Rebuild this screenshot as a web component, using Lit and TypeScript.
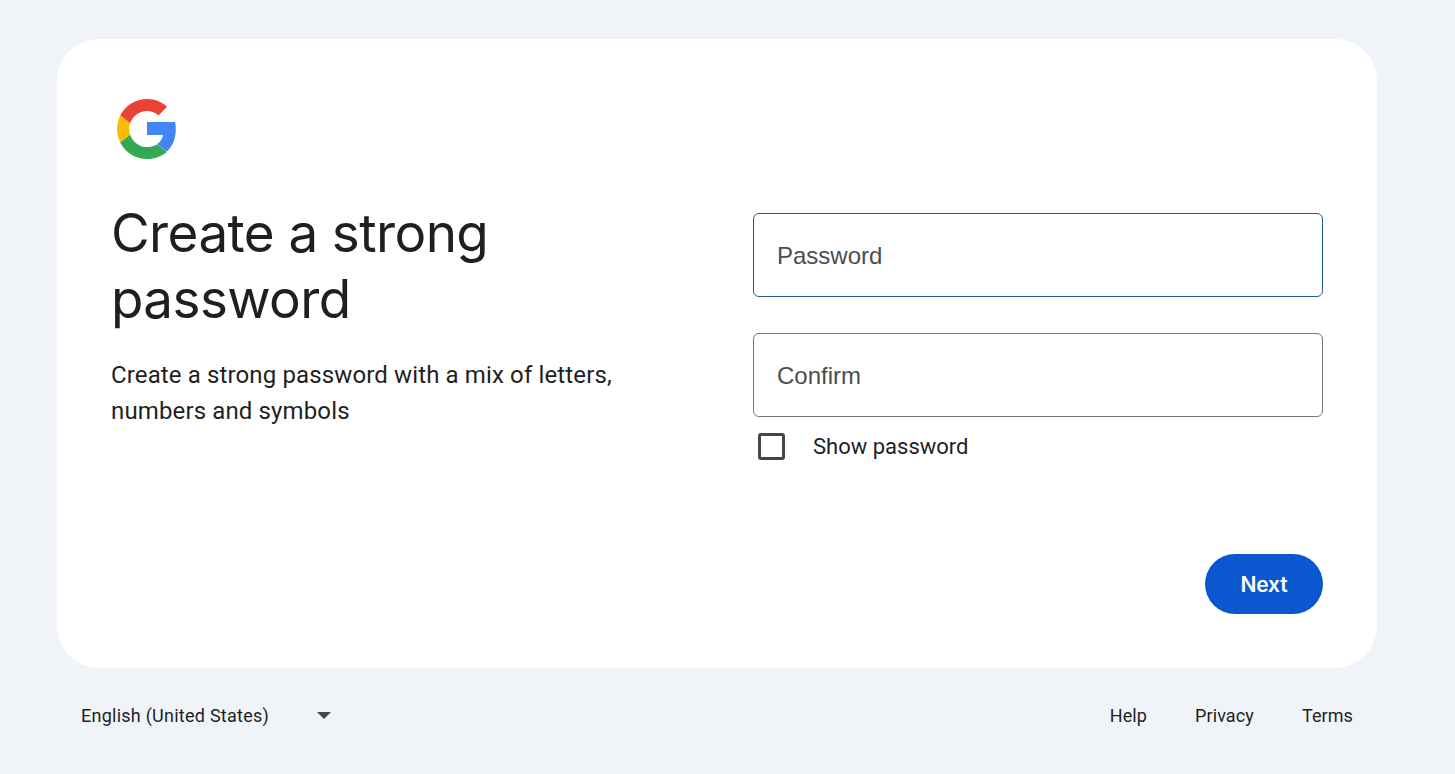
import { LitElement, html, css } from 'lit';
import { customElement } from 'lit/decorators.js';

@customElement('app-root')
export class AppRoot extends LitElement {
  static styles = css`
    :host {
      display: block;
      height: 774px;
      overflow: hidden;
      background: #f0f4f9;
      color: #1f1f1f;
      font-family: Roboto, 'Noto Sans', sans-serif;
    }

    .page {
      width: 1320px;
      padding: 39px 0 0 57px;
    }

    .card {
      box-sizing: border-box;
      height: 629px;
      padding: 60px 54px 54px;
      background: #fff;
      border-radius: 42px;
    }

    .logo {
      display: block;
      width: 60px;
      height: 60px;
      margin-left: 6px;
    }

    .columns {
      display: grid;
      grid-template-columns: 1fr 570px;
      margin-top: 41px;
    }

    h1 {
      margin: 0;
      font-family: Inter, 'Open Sans', sans-serif;
      font-size: 53px;
      font-weight: 400;
      line-height: 66px;
      letter-spacing: -0.6px;
    }

    .intro {
      width: 540px;
      margin: 25px 0 0;
      font-size: 24px;
      line-height: 36px;
      letter-spacing: 0.13px;
    }

    .form {
      padding-top: 13px;
    }

    .field {
      box-sizing: border-box;
      height: 84px;
      margin-bottom: 36px;
      padding: 2px 23px 0;
      display: flex;
      align-items: center;
      border: 1px solid #747775;
      border-radius: 6px;
      font-family: 'Liberation Sans', Arial, sans-serif;
      font-size: 24px;
      color: #4b4e4d;
    }
    .field.active {
      border-color: #1d5c94;
    }
    .field.last {
      margin-bottom: 0;
    }

    .show {
      display: flex;
      align-items: center;
      margin-top: 16px;
      padding-left: 5px;
      font-size: 22px;
      font-weight: 400;
    }

    .box {
      box-sizing: border-box;
      width: 27px;
      height: 27px;
      margin-right: 28px;
      border: 3px solid #444746;
      border-radius: 3px;
    }

    .actions {
      display: flex;
      justify-content: flex-end;
      margin-top: 94px;
    }

    .next {
      width: 118px;
      height: 60px;
      padding: 0;
      border: 0;
      border-radius: 30px;
      background: #0b57d0;
      color: #fff;
      font-family: Inter, Roboto, sans-serif;
      font-size: 21px;
      font-weight: 600;
      letter-spacing: -0.15px;
    }

    footer {
      display: flex;
      justify-content: space-between;
      align-items: center;
      height: 94px;
      padding: 0 24px;
      font-size: 18px;
      letter-spacing: 0.25px;
      color: #1f1f1f;
    }

    .language {
      display: flex;
      align-items: center;
    }

    .caret {
      width: 0;
      height: 0;
      margin-left: 48px;
      border-left: 7px solid transparent;
      border-right: 7px solid transparent;
      border-top: 7px solid #444746;
    }

    .links {
      display: flex;
      gap: 48px;
      letter-spacing: 0.1px;
    }
  `;

  protected render() {
    return html`
      <div class="page">
        <main class="card">
          <svg class="logo" viewBox="0 0 48 48" aria-hidden="true">
            <path fill="#EA4335" d="M24 9.5c3.54 0 6.71 1.22 9.21 3.6l6.85-6.85C35.9 2.38 30.47 0 24 0 14.62 0 6.51 5.38 2.56 13.22l7.98 6.19C12.43 13.72 17.74 9.5 24 9.5z"/>
            <path fill="#4285F4" d="M47 24.5c0-2.1-.1-4.2-.5-6.2H24v10.5h12.9c-.6 2.96-2.26 5.48-4.78 7.18l7.73 6c4.51-4.18 7.15-10.2 7.15-17.48z"/>
            <path fill="#FBBC05" d="M10.53 28.59c-.48-1.45-.76-2.99-.76-4.59s.27-3.14.76-4.59l-7.98-6.19C.92 16.46 0 20.12 0 24c0 3.88.92 7.54 2.56 10.78l7.97-6.19z"/>
            <path fill="#34A853" d="M24 48c6.48 0 11.93-2.13 15.89-5.81l-7.73-6c-2.15 1.45-4.92 2.3-8.16 2.3-6.26 0-11.57-4.22-13.47-9.91l-7.98 6.19C6.51 42.62 14.62 48 24 48z"/>
          </svg>
          <div class="columns">
            <div>
              <h1>Create a strong<br />password</h1>
              <p class="intro">Create a strong password with a mix of letters, numbers and symbols</p>
            </div>
            <div class="form">
              <div class="field active">Password</div>
              <div class="field last">Confirm</div>
              <div class="show"><span class="box"></span>Show password</div>
              <div class="actions"><button class="next">Next</button></div>
            </div>
          </div>
        </main>
        <footer>
          <div class="language">English (United States)<span class="caret"></span></div>
          <div class="links"><span>Help</span><span>Privacy</span><span>Terms</span></div>
        </footer>
      </div>
    `;
  }
}

declare global {
  interface HTMLElementTagNameMap {
    'app-root': AppRoot;
  }
}
